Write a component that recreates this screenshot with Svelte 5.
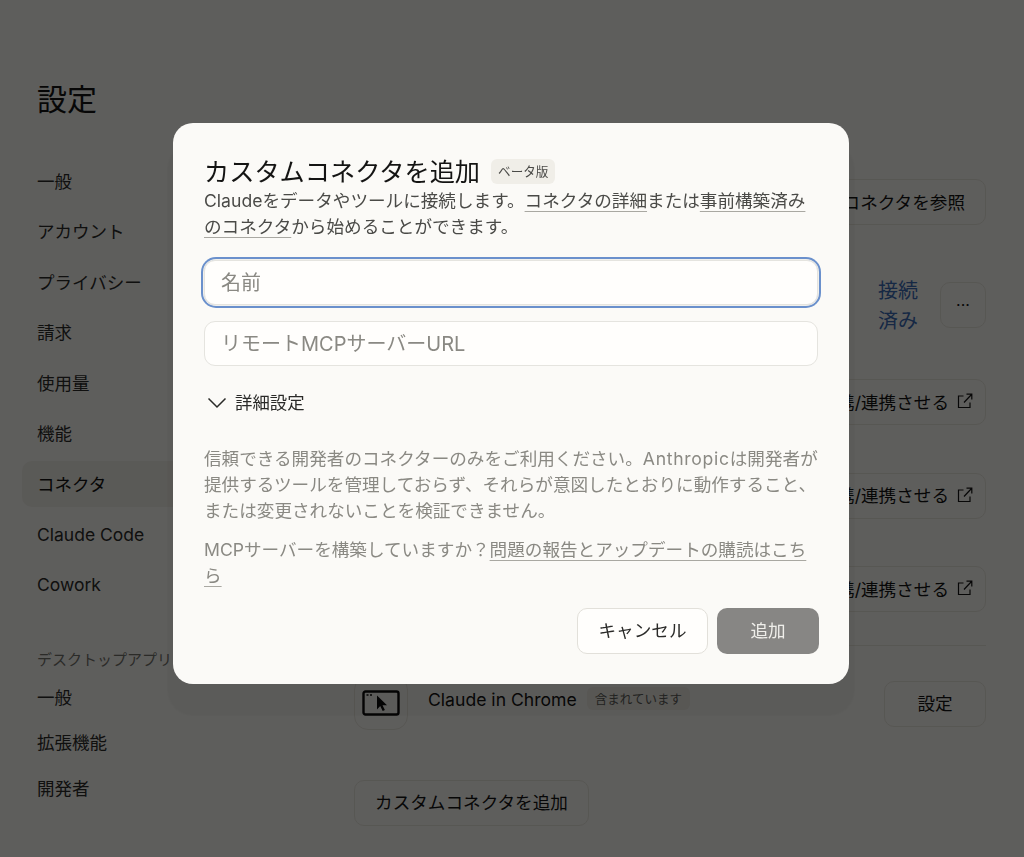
<script lang="ts">
	const mainNav = ['一般', 'アカウント', 'プライバシー', '請求', '使用量', '機能', 'コネクタ', 'Claude Code', 'Cowork']
	const desktopNav = ['一般', '拡張機能', '開発者']
</script>

{#snippet external()}
	<svg class='ext' width='16' height='16' viewBox='0 0 16 16' fill='none' stroke='currentColor' stroke-width='1.2'>
		<path d='M6.5 3H1.5v11.5H13V9.5' />
		<path d='M7 9.5 14.5 1.5M9.5 1.2h5.3v5.3' />
	</svg>
{/snippet}

<div class='page'>
	<h1>設定</h1>
	<div class='columns'>
		<nav>
			{#each mainNav as item}
				<a class='nav-item' class:active={item === 'コネクタ'} href='#top'>{item}</a>
			{/each}
			<div class='nav-label'>デスクトップアプリ</div>
			{#each desktopNav as item}
				<a class='nav-item small' href='#top'>{item}</a>
			{/each}
		</nav>

		<main>
			<div class='top-row'>
				<button class='ghost wide'>コネクタを参照</button>
			</div>
			<div class='row connected'>
				<span class='status'>接続<br />済み</span>
				<button class='ghost dots'>···</button>
			</div>
			<div class='row link-row'>
				<button class='ghost wide linked'>連携/連携させる {@render external()}</button>
			</div>
			<div class='row link-row'>
				<button class='ghost wide linked'>連携/連携させる {@render external()}</button>
			</div>
			<div class='row link-row'>
				<button class='ghost wide linked'>連携/連携させる {@render external()}</button>
			</div>
			<div class='row chrome'>
				<div class='icon-box'>
					<svg width='38' height='26' viewBox='0 0 38 26' fill='none'>
						<rect x='1.5' y='1.5' width='35' height='23' rx='2' stroke='#0c0c0c' stroke-width='2.4' />
						<path d='M4.5 5h2M8 5h2' stroke='#0c0c0c' stroke-width='1.6' />
						<path d='M15 5.5v14l3.2-3.4 2.5 5 2.2-1-2.4-4.9h4.5z' fill='#0c0c0c' />
					</svg>
				</div>
				<span class='chrome-name'>Claude in Chrome</span>
				<span class='badge-included'>含まれています</span>
				<button class='ghost settings'>設定</button>
			</div>
			<button class='ghost add-custom'>カスタムコネクタを追加</button>
		</main>
	</div>
</div>

<div class='overlay'>
	<div class='modal'>
		<div class='title-row'>
			<h2>カスタムコネクタを追加</h2>
			<span class='beta'>ベータ版</span>
		</div>
		<p class='intro'>
			Claudeをデータやツールに接続します。<a href='#top'>コネクタの詳細</a>または<a href='#top'>事前構築済みのコネクタ</a>から始めることができます。
		</p>

		<div class='fields'>
			<div class='focus-ring'><input placeholder='名前' /></div>
			<input placeholder='リモートMCPサーバーURL' />
		</div>

		<button class='advanced'>
			<svg width='20' height='12' viewBox='0 0 20 12' fill='none' stroke='#2a2a28' stroke-width='1.5'>
				<path d='M1.5 1.5 10 10l8.5-8.5' />
			</svg>
			詳細設定
		</button>

		<p class='note first'>信頼できる開発者のコネクターのみをご利用ください。<span class='brand'>Anthropic</span>は開発者が提供するツールを管理しておらず、それらが意図したとおりに動作すること、または変更されないことを検証できません。</p>
		<p class='note'>MCPサーバーを構築していますか？<a href='#top'>問題の報告とアップデートの購読はこちら</a></p>

		<div class='actions'>
			<button class='cancel'>キャンセル</button>
			<button class='submit' disabled>追加</button>
		</div>
	</div>
</div>

<style>
	:global(body) {
		margin: 0;
		background: #faf9f5;
		font-family: Inter, 'Noto Sans CJK JP', sans-serif;
		color: #141413;
	}

	button,
	input {
		font-family: inherit;
	}

	.page {
		box-sizing: border-box;
		height: 857px;
		overflow: hidden;
		padding: 81px 38px 0 37px;
	}

	h1 {
		margin: 0 0 39px;
		font-size: 30px;
		line-height: 37px;
		font-weight: 400;
	}

	.columns {
		display: flex;
	}

	nav {
		display: flex;
		flex-direction: column;
		width: 317px;
		flex: none;
	}

	.nav-item {
		display: flex;
		align-items: center;
		height: 46px;
		margin: 0 135px 4.6px -15px;
		padding-left: 15px;
		border-radius: 10px;
		font-size: 17.5px;
		color: #2c2c2a;
		text-decoration: none;
	}

	.nav-item.active {
		background: #f0eee6;
		color: #141413;
	}

	.nav-item.small {
		margin-bottom: -0.5px;
	}

	.nav-label {
		margin: 36px 0 1px;
		font-size: 15px;
		line-height: 24px;
		color: #73726c;
		white-space: nowrap;
	}

	main {
		flex: 1;
		display: flex;
		flex-direction: column;
		margin-top: 22px;
	}

	.ghost {
		box-sizing: border-box;
		height: 46px;
		background: transparent;
		border: 1px solid #e8e6dc;
		border-radius: 10px;
		font-size: 17.6px;
		color: #141413;
		white-space: nowrap;
	}

	.top-row,
	.row {
		display: flex;
		justify-content: flex-end;
		align-items: center;
	}

	.wide {
		display: flex;
		align-items: center;
		justify-content: flex-end;
		gap: 10px;
		width: 200px;
		padding: 0 20px 2px;
	}

	.wide.linked {
		gap: 8px;
		padding: 0 12px 2px;
	}

	.row.connected {
		margin-top: 49px;
		gap: 22px;
	}

	.status {
		padding-top: 2px;
		font-size: 20px;
		line-height: 30px;
		color: #3b6cb5;
	}

	.dots {
		width: 46px;
		font-size: 16px;
		font-weight: 400;
		padding: 0;
	}

	.link-row {
		margin-top: 43px;
	}

	.link-row + .link-row {
		margin-top: 47.5px;
	}

	.row.chrome {
		margin-top: 33px;
		padding-top: 35px;
		border-top: 1px solid #e8e6dc;
		justify-content: flex-start;
		height: 46px;
	}

	.icon-box {
		box-sizing: border-box;
		flex: none;
		display: flex;
		align-items: center;
		justify-content: center;
		width: 54px;
		height: 54px;
		border: 1px solid #e8e6dc;
		border-radius: 14px;
		margin-right: 20px;
		position: relative;
		top: -1px;
	}

	.chrome-name {
		font-size: 17.6px;
		position: relative;
		top: -5px;
	}

	.badge-included {
		margin-left: 10px;
		padding: 2px 8px;
		border-radius: 6px;
		background: #f0eee6;
		font-size: 12.5px;
		color: #5e5d59;
		position: relative;
		top: -6px;
	}

	.settings {
		margin-left: auto;
		width: 102px;
		padding: 0 0 3px;
	}

	.add-custom {
		align-self: flex-start;
		margin-top: 53px;
		width: 235px;
		padding: 0 0 3px;
	}

	.overlay {
		position: fixed;
		inset: 0;
		background: rgba(0, 0, 0, 0.625);
	}

	.modal {
		position: absolute;
		left: 173px;
		top: 123px;
		box-sizing: border-box;
		width: 676px;
		height: 561px;
		padding: 31px;
		border-radius: 20px;
		background: #fbfaf7;
		box-shadow: 0 26px 2px 6px rgba(0, 0, 0, 0.035);
	}

	.title-row {
		display: flex;
		align-items: center;
		gap: 11px;
		height: 34px;
	}

	h2 {
		margin: 0;
		padding-top: 2px;
		font-size: 25.2px;
		line-height: 34px;
		font-weight: 400;
		color: #141413;
	}

	.beta {
		padding: 2px 7px;
		border-radius: 6px;
		background: #f0eee8;
		font-size: 12.6px;
		line-height: 21px;
		color: #4a4a47;
	}

	.intro {
		margin: 0;
		font-size: 17.6px;
		line-height: 26px;
		color: #4a4a47;
	}

	.intro a,
	.note a {
		color: inherit;
		text-decoration: underline;
		text-decoration-thickness: 1px;
		text-decoration-color: #a9a8a2;
		text-underline-offset: 4px;
	}

	.fields {
		display: flex;
		flex-direction: column;
		gap: 16px;
		margin-top: 20px;
	}

	.focus-ring {
		border-radius: 12px;
		box-shadow: 0 0 0 1px #f1f0ec, 0 0 0 3px #6a90cc;
	}

	input {
		box-sizing: border-box;
		display: block;
		width: 100%;
		height: 45px;
		padding: 0 16px;
		background: #fffefc;
		border: 1px solid #e5e4df;
		border-radius: 11px;
		font-size: 20px;
		outline: none;
	}

	input::placeholder {
		color: #8a8983;
		opacity: 1;
	}

	.advanced {
		display: flex;
		align-items: center;
		gap: 8px;
		margin: 24px 0 0 3px;
		padding: 0;
		background: none;
		border: 0;
		font-size: 17.4px;
		line-height: 26px;
		color: #2a2a28;
	}

	.note {
		margin: 13px 0 0;
		font-size: 17.6px;
		line-height: 26px;
		color: #8a8983;
	}

	.note.first {
		margin-top: 30px;
	}

	.brand {
		letter-spacing: 0.7px;
	}

	.actions {
		display: flex;
		justify-content: flex-end;
		gap: 9px;
		margin: 19px -1px 0 0;
	}

	.actions button {
		box-sizing: border-box;
		height: 46px;
		padding: 0 0 3px;
		border-radius: 10px;
		font-size: 17.6px;
	}

	.cancel {
		width: 131px;
		background: #fffefc;
		border: 1px solid #e2e0da;
		color: #2a2a28;
	}

	.submit {
		width: 102px;
		background: #878684;
		border: 0;
		color: #efeeea;
	}
</style>
